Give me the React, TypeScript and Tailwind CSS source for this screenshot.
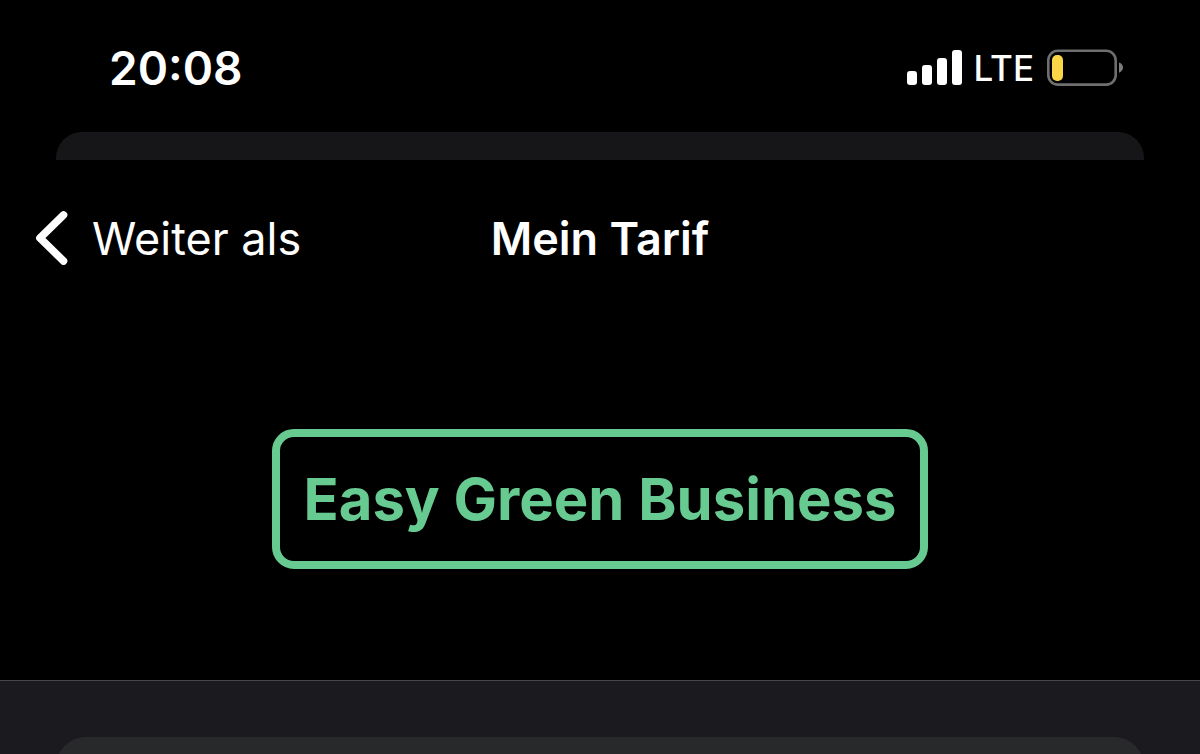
import React from "react";

interface PlanBadgeProps {
  name: string;
}

// Heights of the signal bars, weakest first
const signalBars = [14, 20, 27, 35];

const SignalIcon: React.FC = () => (
  <svg width="55" height="36" viewBox="0 0 55 36" fill="white" aria-hidden="true">
    {signalBars.map((height, index) => (
      <rect
        key={height}
        x={index * 15}
        y={35 - height}
        width="10"
        height={height}
        rx="3"
      />
    ))}
  </svg>
);

const BatteryIcon: React.FC = () => (
  <svg width="78" height="38" viewBox="0 0 78 38" fill="none" aria-hidden="true">
    <rect x="2.3" y="1.8" width="67.4" height="33.8" rx="9.5" stroke="#6f6f6f" strokeWidth="2.6" />
    <rect x="6" y="6" width="11" height="26" rx="5" fill="#fbd548" />
    <path d="M73 13.5C75.6 14.4 77 16.2 77 18.6C77 21 75.6 22.8 73 23.7Z" fill="#7d7d7d" />
  </svg>
);

const StatusBar: React.FC = () => (
  <header className="flex h-[132px] shrink-0 items-center justify-between pt-1 pr-[76px] pl-[109px]">
    <time className="text-[46px] leading-none font-semibold">20:08</time>
    <div className="flex items-center gap-3">
      <SignalIcon />
      <span className="text-[35px] leading-none font-medium">LTE</span>
      <BatteryIcon />
    </div>
  </header>
);

const NavBar: React.FC = () => (
  <nav className="grid h-[156px] shrink-0 grid-cols-3 items-center px-9">
    <button type="button" className="flex items-center gap-6 text-left whitespace-nowrap">
      <svg width="32" height="54" viewBox="0 0 32 54" fill="none" aria-hidden="true">
        <path
          d="M27.5 4L4 27L27.5 50"
          stroke="white"
          strokeWidth="7.6"
          strokeLinecap="round"
          strokeLinejoin="round"
        />
      </svg>
      <span className="text-[45px] leading-none">Weiter als</span>
    </button>
    <h1 className="text-center text-[45px] leading-none font-semibold whitespace-nowrap">
      Mein Tarif
    </h1>
  </nav>
);

const PlanBadge: React.FC<PlanBadgeProps> = ({ name }) => (
  <h2 className="rounded-[22px] border-8 border-[#67ca91] px-[23px] py-8 text-[58px] leading-[60px] font-bold whitespace-nowrap text-[#67ca91]">
    {name}
  </h2>
);

const App: React.FC = () => {
  return (
    <div className="flex h-screen flex-col overflow-hidden bg-black font-[Inter,sans-serif] text-white">
      <StatusBar />

      {/* Edge of the sheet lying underneath */}
      <div className="mx-14 h-7 shrink-0 rounded-t-[26px] bg-[#161618]" />

      <NavBar />

      <main className="flex min-h-0 grow flex-col">
        <section className="flex shrink-0 justify-center pt-[113px] pb-[111px]">
          <PlanBadge name="Easy Green Business" />
        </section>

        <section className="grow border-t border-[#48484a] bg-[#1b1a1e] px-14 pt-14">
          <div className="h-40 rounded-t-[30px] bg-[#28292a]" />
        </section>
      </main>
    </div>
  );
};

export default App;
